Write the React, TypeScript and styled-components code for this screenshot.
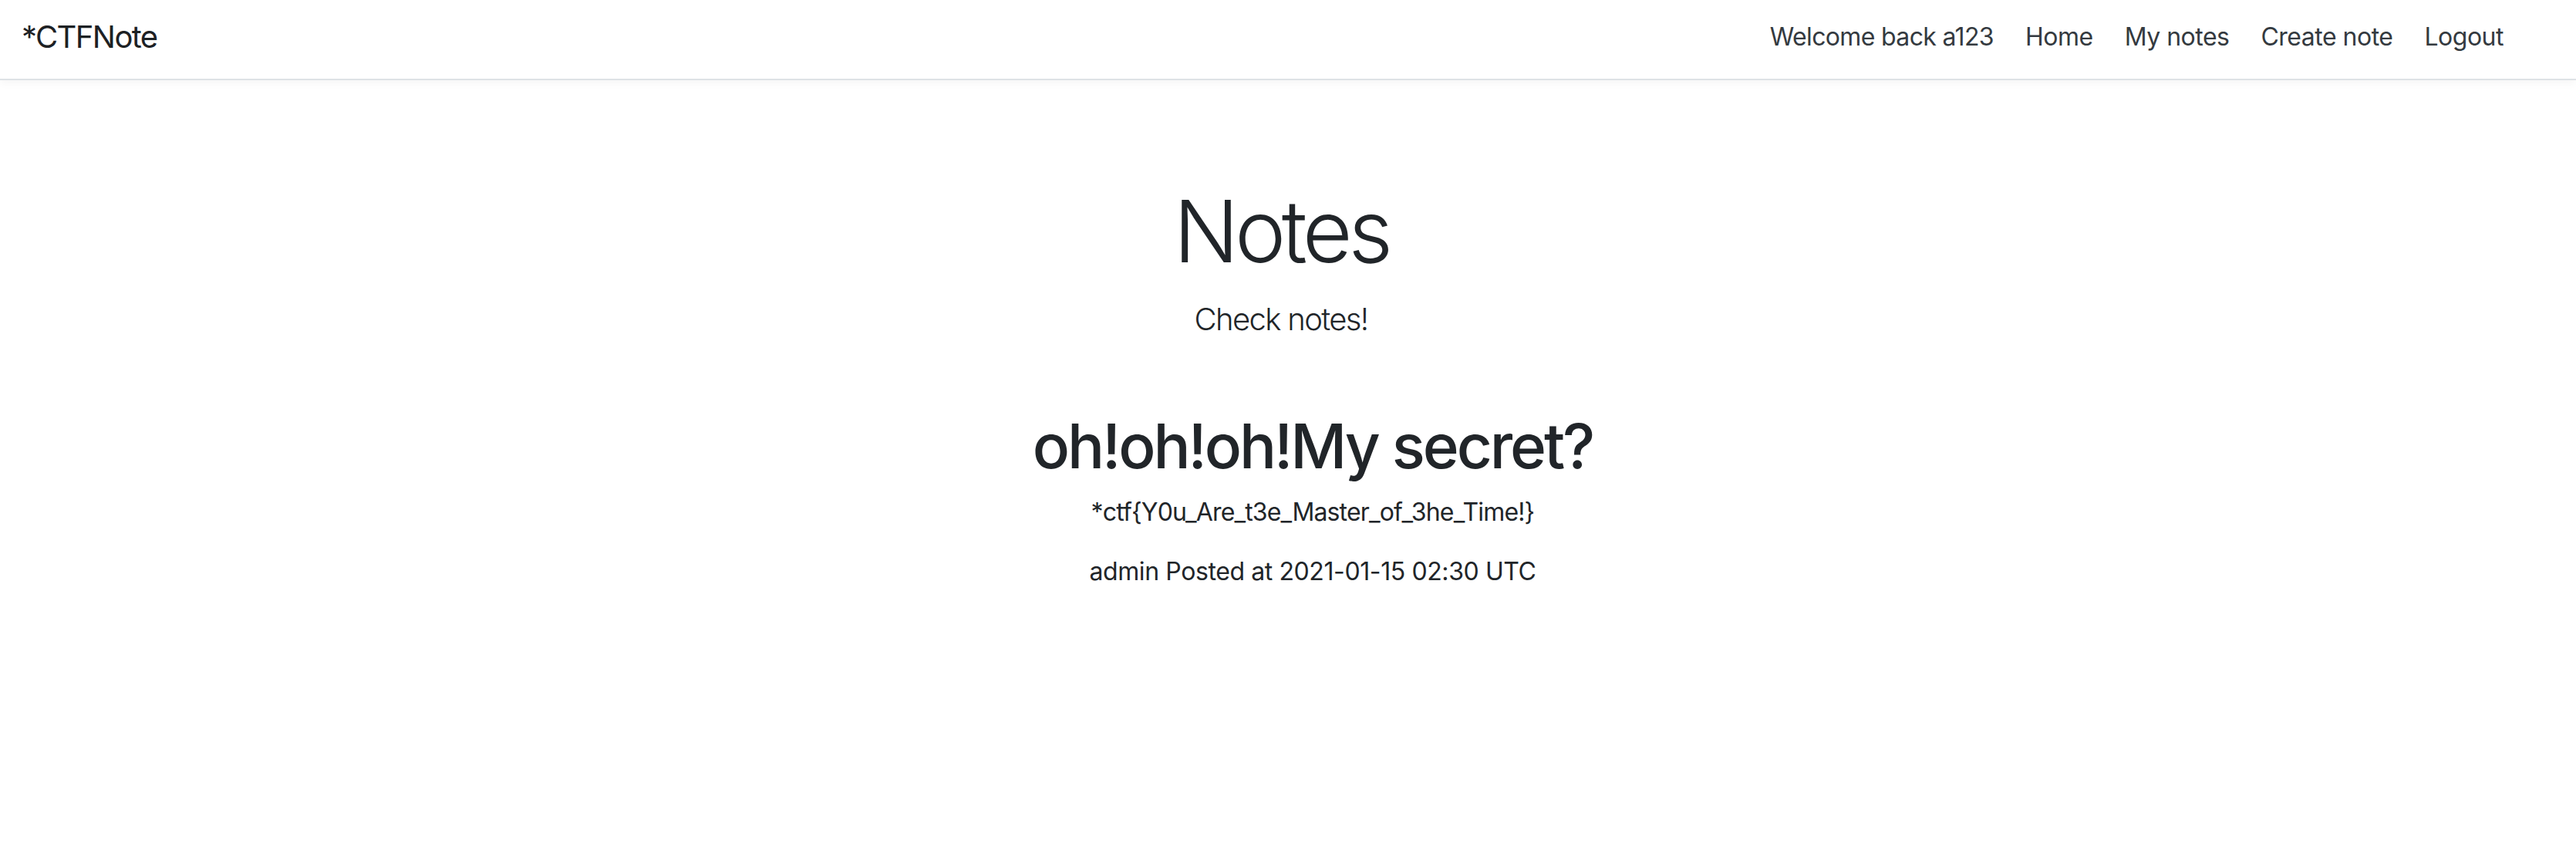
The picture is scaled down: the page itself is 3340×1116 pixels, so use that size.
import React from 'react';
import styled, { createGlobalStyle } from 'styled-components';

const GlobalStyle = createGlobalStyle`
  html, body {
    margin: 0;
    padding: 0;
    background: #fff;
  }
  body {
    font-family: Inter, "Noto Sans", "Liberation Sans", sans-serif;
    color: #212529;
  }
  * {
    box-sizing: border-box;
  }
`;

const navLinks = ['Home', 'My notes', 'Create note', 'Logout'];

const App: React.FC = () => {
  return (
    <>
      <GlobalStyle />
      <Navbar>
        <Brand href="#">*CTFNote</Brand>
        <NavList>
          <NavText>Welcome back a123</NavText>
          {navLinks.map((label) => (
            <NavLink key={label} href="#">
              {label}
            </NavLink>
          ))}
        </NavList>
      </Navbar>
      <Main>
        <Jumbotron>
          <DisplayTitle>Notes</DisplayTitle>
          <Lead>Check notes!</Lead>
        </Jumbotron>
        <NoteList>
          <Note>
            <NoteTitle>oh!oh!oh!My secret?</NoteTitle>
            <NoteBody>*ctf{'{'}Y0u_Are_t3e_Master_of_3he_Time!{'}'}</NoteBody>
            <NoteMeta>admin Posted at 2021-01-15 02:30 UTC</NoteMeta>
          </Note>
        </NoteList>
      </Main>
    </>
  );
};

const Navbar = styled.nav`
  height: 104px;
  display: flex;
  align-items: center;
  justify-content: space-between;
  padding: 0 94px 6px 28px;
  background: #fff;
  border-bottom: 2px solid #dee2e6;
  box-shadow: 0 4px 10px rgba(0, 0, 0, 0.04);
  position: relative;
  z-index: 1;
`;

const Brand = styled.a`
  font-size: 40px;
  line-height: 60px;
  color: #1d2124;
  text-decoration: none;
  letter-spacing: -1.6px;
`;

const NavList = styled.div`
  display: flex;
  align-items: center;
  gap: 41px;
`;

const NavText = styled.span`
  font-size: 32px;
  line-height: 48px;
  color: #343a40;
  letter-spacing: -0.65px;
`;

const NavLink = styled.a`
  font-size: 32px;
  line-height: 48px;
  color: #343a40;
  text-decoration: none;
  letter-spacing: -0.5px;
`;

const Main = styled.main`
  display: flex;
  flex-direction: column;
`;

const Jumbotron = styled.section`
  padding: 128px 18px 0 0;
  text-align: center;
`;

const DisplayTitle = styled.h1`
  margin: 0 0 18px;
  font-size: 112px;
  line-height: 1.2;
  font-weight: 300;
  letter-spacing: -5.5px;
`;

const Lead = styled.p`
  margin: 0;
  font-size: 40px;
  line-height: 60px;
  font-weight: 300;
  letter-spacing: -1.65px;
`;

const NoteList = styled.section`
  padding: 86px 0 0 64px;
  text-align: center;
`;

const Note = styled.article`
  display: flex;
  flex-direction: column;
  align-items: center;
`;

const NoteTitle = styled.h2`
  margin: 0 0 14px;
  font-size: 80px;
  line-height: 96px;
  font-weight: 500;
  letter-spacing: -3.1px;
`;

const NoteBody = styled.p`
  margin: 0 0 29px;
  font-size: 32px;
  line-height: 48px;
  letter-spacing: -0.85px;
`;

const NoteMeta = styled.p`
  margin: 0;
  font-size: 32px;
  line-height: 48px;
  letter-spacing: -0.4px;
`;

export default App;
